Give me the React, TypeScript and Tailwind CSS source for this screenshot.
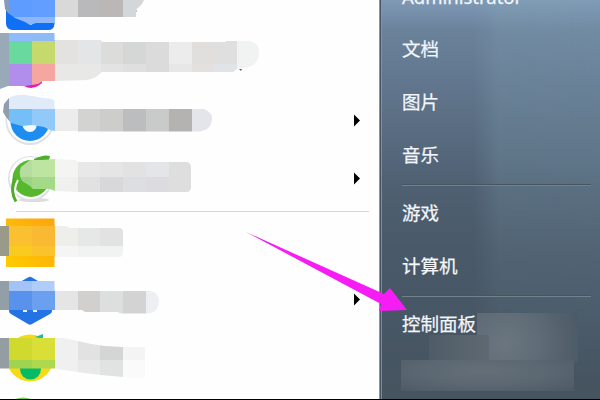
import { memo, type ReactNode } from 'react';

// x, y, width, height, color
type Tile = [number, number, number, number, string];

interface Program {
  id: string;
  top: number;
  height: number;
  outline: string;
  tiles: Tile[];
  icon: ReactNode;
  hasSubmenu?: boolean;
}

const recentPrograms: Program[] = [
  {
    id: 'p1',
    top: 0,
    height: 31,
    outline: 'M4 0H144L142 4L138 8L136 10V17H54.5V23L36 23L30 25L25 22L15 18L8 13L5 9Z',
    tiles: [
      [4, 0, 5, 31, '#849bbd'],
      [9, 0, 23, 17, '#5e9cff'],
      [32, 0, 22.5, 17, '#629eff'],
      [9, 17, 45.5, 8, '#8cb8fa'],
      [54.5, 0, 23, 18, '#d9d9d9'],
      [77.5, 0, 22.5, 18, '#b9b9bb'],
      [100, 0, 23, 18, '#bab7b6'],
      [123, 0, 22, 18, '#d4d7d9'],
    ],
    icon: (
      <>
        <path d="M6 8L6 0H54.5V24Q54 30 48 30H12Q6 29 6 23Z" fill="#1070f5" />
        <path d="M24 20H38L31 25Z" fill="#f4f8ff" />
        <path d="M134.500 10h2v2h-2Z" fill="#7d8c9a" />
      </>
    ),
  },
  {
    id: 'p2',
    top: 31,
    height: 60,
    outline: 'M0 33H54.5V40H101L102 42H226V41H250Q259 43 259 52Q259 64 249 67L237 69L233 72H102L96 77L88 80L54.5 81H43L38 84L25 86H8L0 89Z',
    tiles: [
      [0, 33, 9, 57, '#9aa9b8'],
      [9, 33, 23, 7.5, '#8fbafc'],
      [32, 33, 22.5, 7.5, '#8fbaf5'],
      [9, 40.5, 23, 23, '#69d9a0'],
      [32, 40.5, 22.5, 23, '#c5d96d'],
      [9, 63.5, 23, 23, '#b18eeb'],
      [32, 63.5, 22.5, 22, '#f6a6a0'],
      [54.5, 40, 23, 23.5, '#e3e2e0'],
      [54.5, 63.5, 46, 18, '#e8e8e7'],
      [77.5, 40, 23, 23.5, '#e3e5e7'],
      [100.5, 41, 22.5, 22.5, '#dcdcda'],
      [100.5, 63.5, 22.5, 15, '#e3e3e3'],
      [123, 41, 23, 22.5, '#d5d6d6'],
      [123, 63.5, 23, 10, '#dfdfdf'],
      [146, 41, 22.5, 31, '#dbdbdc'],
      [168.5, 41, 23, 22.5, '#ececec'],
      [168.5, 63.5, 23, 10, '#e7e7e8'],
      [191.5, 41, 22.5, 22.5, '#e0dfdd'],
      [191.5, 63.5, 22.5, 10, '#e3e0df'],
      [214, 41, 23, 22.5, '#dfdfdf'],
      [214, 63.5, 23, 10, '#e2e3e6'],
      [237, 41, 23, 31, '#f1f3f3'],
    ],
    icon: (
      <>
        <path d="M24 86Q33 91 42 83V80H24Z" fill="#e020b0" />
        <path d="M239 69h3l-1 2Z" fill="#456070" />
      </>
    ),
  },
  {
    id: 'p3',
    top: 91,
    height: 58,
    outline: 'M9 98Q15 94 27 95L34 97L52 99L54.5 101V109H204Q213 113 212 119Q211 131 198 131.5H78V131H54.5L50 130L44 127L32 125L22 126L11 123L6 117L3 112L4 104Z',
    tiles: [
      [2, 94, 7, 32, '#909dac'],
      [9, 94, 46, 15, '#dfebf8'],
      [9, 109, 23, 18, '#75bff9'],
      [32, 109, 22.5, 22, '#91caf8'],
      [54.5, 109, 23, 23, '#ebeceb'],
      [77.5, 109, 22.5, 23, '#d3d3d2'],
      [100, 109, 23, 23, '#cdcdcc'],
      [123, 109, 23, 23, '#bbbdbf'],
      [146, 109, 22.5, 23, '#c8cbca'],
      [168.5, 109, 23, 23, '#b4b3b2'],
      [191.5, 109, 22, 23, '#e3e5ea'],
    ],
    icon: (
      <>
        <circle cx="30" cy="120.500" r="24.5" fill="#dde1e7" />
        <circle cx="30" cy="120" r="23" fill="#fbfcff" />
        <circle cx="30" cy="121.500" r="19.5" fill="#1e8df0" />
        <path d="M22 124H37Q36 132 30 132T22 124Z" fill="#f4f9ff" />
      </>
    ),
    hasSubmenu: true,
  },
  {
    id: 'p4',
    top: 149,
    height: 58,
    outline: 'M21 167L30 160L42 160L54.5 159L76 160L78 162H187Q191 163 191 167V188Q190 192 187 192H78L55 191L50 189L33 189L30 186L22 181Q18 174 21 167Z',
    tiles: [
      [18, 158, 14, 19, '#b5dd9f'],
      [32, 158, 22.5, 19, '#bde4a0'],
      [18, 177, 14, 15, '#9bd483'],
      [32, 177, 22.5, 15, '#a4da87'],
      [54.5, 158, 23, 19, '#f4f5f2'],
      [54.5, 177, 23, 16, '#f0f0ee'],
      [77.5, 160, 22.5, 17, '#e8e8e8'],
      [77.5, 177, 22.5, 16, '#e1e1e1'],
      [100, 160, 23, 17, '#e5e5e5'],
      [100, 177, 23, 16, '#d8d8da'],
      [123, 160, 23, 17, '#e2e2e3'],
      [123, 177, 23, 16, '#dcdee2'],
      [146, 160, 23, 17, '#e3e5e9'],
      [146, 177, 23, 16, '#dcdcde'],
      [168.5, 160, 23, 33, '#dedede'],
    ],
    icon: (
      <>
        <ellipse cx="34" cy="200" rx="15" ry="2" fill="#dfdcdf" />
        <circle cx="30.500" cy="178.500" r="22.5" fill="#dcdfe4" />
        <circle cx="30.500" cy="178" r="21" fill="#ffffff" />
        <circle cx="31" cy="178.500" r="18.5" fill="#55b82d" />
        <path d="M34 159Q44 154 50 156L49 160H34Z" fill="#4fae2b" />
        <path d="M18 180Q12 190 17.500 202" fill="none" stroke="#ffffff" strokeWidth="2" />
        <path d="M14.500 178Q10 192 16 201.500" fill="none" stroke="#50ab2c" strokeWidth="3" />
      </>
    ),
    hasSubmenu: true,
  },
];

const otherPrograms: Program[] = [
  {
    id: 'p5',
    top: 215,
    height: 55,
    outline: 'M0 226H65L70 228H119Q123 228 123 232V252Q123 257 119 257H54.5V256H0Z',
    tiles: [
      [0, 226, 8.5, 30, '#9a9a8a'],
      [8.5, 226, 23.5, 19.5, '#fac02f'],
      [32, 226, 22.5, 19.5, '#fab933'],
      [8.5, 245.5, 23.5, 11, '#fbca21'],
      [32, 245.5, 22.5, 11, '#fac22b'],
      [54.5, 226, 23, 19.5, '#eeeeeb'],
      [77.5, 226, 22.5, 19.5, '#e6e8e8'],
      [100, 226, 23, 19.5, '#e1e2e1'],
      [54.5, 245.5, 23, 12, '#f5f5f5'],
      [77.5, 245.5, 46, 12, '#f1f2f2'],
    ],
    icon: (
      <>
        <defs>
          <linearGradient id="folder" x1="1" y1="0" x2="0" y2="1">
            <stop offset="0" stopColor="#fda40e" />
            <stop offset="1" stopColor="#ffcc00" />
          </linearGradient>
        </defs>
        <path d="M6 218.500H54.5V267H6Z" fill="url(#folder)" />
      </>
    ),
  },
  {
    id: 'p6',
    top: 270,
    height: 57,
    outline: 'M0 281H54.5V291H150Q159 292 159 302Q158 312 150 313.500H120L118 312H85L82 310H0Z',
    tiles: [
      [0, 281, 8.5, 29.5, '#929fa6'],
      [8.5, 281, 23.5, 10, '#a3c3f6'],
      [32, 281, 22.5, 10, '#b0ccf8'],
      [8.5, 291, 23.5, 20, '#5992ec'],
      [32, 291, 22.5, 20, '#6ba0f1'],
      [54.5, 291, 23, 20, '#e4e5e4'],
      [77.5, 291, 22.5, 23, '#d2d0cf'],
      [100, 291, 23, 23, '#dddede'],
      [123, 291, 22.5, 23, '#d3d3d4'],
      [145.5, 291, 14, 23, '#edeff3'],
    ],
    icon: (
      <>
        <path d="M28 277.500Q30 276 32 277.500L50 288Q52 290 52 293V311Q52 313 50 314L32 324Q30 325.500 28 324L11 314Q9 313 9 311V291Q9 288 11 287Z" fill="#2473e5" />
        <path d="M23 310h4v2h-4ZM33 310h4v2h-4Z" fill="#e8f0ff" />
      </>
    ),
    hasSubmenu: true,
  },
  {
    id: 'p7',
    top: 327,
    height: 63,
    outline: 'M0 338H54.5L64 338L78 341L91 344L105 346L123 347H145V378L123 377L101 375L77 372L55 368.500H0Z',
    tiles: [
      [0, 338, 8.5, 31, '#949da1'],
      [8.5, 338, 23.5, 22, '#cfd92e'],
      [32, 338, 22.5, 22, '#d9df37'],
      [8.5, 360, 23.5, 9, '#9fd350'],
      [32, 360, 22.5, 9, '#aed94f'],
      [54.5, 337, 23, 36, '#f0f0f1'],
      [77.5, 339, 22.5, 21, '#e2e2e2'],
      [77.5, 360, 22.5, 15, '#e8e9e8'],
      [100, 344, 23, 16, '#d5d5d5'],
      [100, 360, 23, 18, '#e1e2e2'],
      [123, 345, 22.5, 15, '#f4f4f5'],
      [123, 360, 22.5, 20, '#fafafa'],
    ],
    icon: (
      <>
        <circle cx="30" cy="358" r="23.5" fill="#f9d916" />
        <circle cx="30.500" cy="369" r="10.5" fill="#06bb65" />
        <path d="M35 337L43 334L43 339Z" fill="#24b99d" />
      </>
    ),
  },
  {
    id: 'p8',
    top: 390,
    height: 9,
    outline: '',
    tiles: [],
    icon: <path d="M15 399Q23 396 31 399Z" fill="#79cf54" />,
  },
];

const libraryLinks = ['文档', '图片', '音乐'];
const systemLinks = ['游戏', '计算机'];

function ProgramRow({ program }: { program: Program }) {
  const { id, top, height, outline, tiles, icon, hasSubmenu } = program;

  return (
    <li className="flex shrink-0" style={{ height }}>
      <svg className="block w-[353px] shrink-0" height={height} viewBox={`0 ${top} 353 ${height}`}>
        <clipPath id={id}>
          <path d={outline} />
        </clipPath>
        {icon}
        <g clipPath={`url(#${id})`} shapeRendering="crispEdges">
          {tiles.map(([x, y, w, h, fill]) => (
            <rect key={`${x}-${y}`} x={x} y={y} width={w} height={h} fill={fill} />
          ))}
        </g>
      </svg>
      {hasSubmenu && (
        <svg className="block w-[8px] shrink-0" height={height} viewBox={`0 0 8 ${height}`}>
          <path d="M1 23.500L7 29.500L1 35.500Z" fill="#000000" />
        </svg>
      )}
    </li>
  );
}

function MenuLink({ label }: { label: string }) {
  return <a className="flex h-[53px] shrink-0 items-center whitespace-nowrap">{label}</a>;
}

function Divider() {
  return (
    <div className="shrink-0 pt-[2px] pb-px">
      <hr className="h-[2px] w-[189px] border-0 border-t border-b border-t-[#465562] border-b-[#72818c]" />
    </div>
  );
}

function App() {
  return (
    <div className="relative flex h-[400px] w-[600px] flex-col overflow-hidden bg-black font-['Liberation_Sans','Noto_Sans_CJK_SC',sans-serif]">
      <div className="flex h-[399px]">
        <section className="flex w-[379px] shrink-0 flex-col bg-[#fefefe]">
          <ul>
            {recentPrograms.map((program) => (
              <ProgramRow key={program.id} program={program} />
            ))}
          </ul>
          <div className="flex h-[8px] items-center pl-4">
            <div className="h-px w-[353px] bg-[#c0dcf2]" />
          </div>
          <ul>
            {otherPrograms.map((program) => (
              <ProgramRow key={program.id} program={program} />
            ))}
          </ul>
        </section>

        <nav className="relative w-[221px] overflow-hidden border-l border-[#8c949e] bg-[linear-gradient(180deg,#7f99b6_0px,#6b829b_30px,#62778f_80px,#5a6d82_125px,#4f6072_185px,#495969_250px,#465460_399px)]">
          {/* glass reflection on the right side */}
          <div className="absolute inset-0 bg-[linear-gradient(90deg,transparent_42%,rgba(135,170,185,0.24)_54%,rgba(130,165,185,0.26)_100%)] [mask-image:linear-gradient(180deg,#000_40%,transparent_95%)]" />
          <div className="absolute inset-y-0 left-0 w-px bg-[#465468]" />
          <div className="absolute inset-y-0 left-px w-px bg-[#8797a6]/80" />
          {/* smudged area under the last link */}
          <div className="absolute top-[313px] left-[97px] h-[49px] w-[101px] bg-[radial-gradient(circle_at_28%_62%,#6b767f,#5f6b76_45%,#4b5966_100%)]" />
          <div className="absolute top-[335px] left-[49px] h-[26px] w-[60px] bg-[linear-gradient(90deg,#4f5c67,#5f6972)]" />
          <div className="absolute top-[360px] left-[21px] h-[31px] w-[173px] bg-[radial-gradient(ellipse_at_48%_35%,#656f78,#5b6771_50%,#4d5965_100%)]" />

          <div className="relative -mt-4 flex flex-col pl-[22px] text-[18.5px] text-[#f3f6fa] [-webkit-text-stroke:0.25px_#f3f6fa]">
            <a className="flex h-[39px] shrink-0 items-start font-['Noto_Sans',sans-serif] text-[18.5px] leading-[26px]">Administrator</a>
            {libraryLinks.map((label) => (
              <MenuLink key={label} label={label} />
            ))}
            <Divider />
            {systemLinks.map((label) => (
              <MenuLink key={label} label={label} />
            ))}
            <Divider />
            <MenuLink label="控制面板" />
          </div>
        </nav>
      </div>

      {/* pointer to the control panel link */}
      <svg className="pointer-events-none absolute inset-0" width="600" height="400" viewBox="0 0 600 400">
        <path d="M246 232L384 294L390 288L407 310L379 311L381 304Z" fill="#f51df4" />
      </svg>
    </div>
  );
}

export default memo(App);
